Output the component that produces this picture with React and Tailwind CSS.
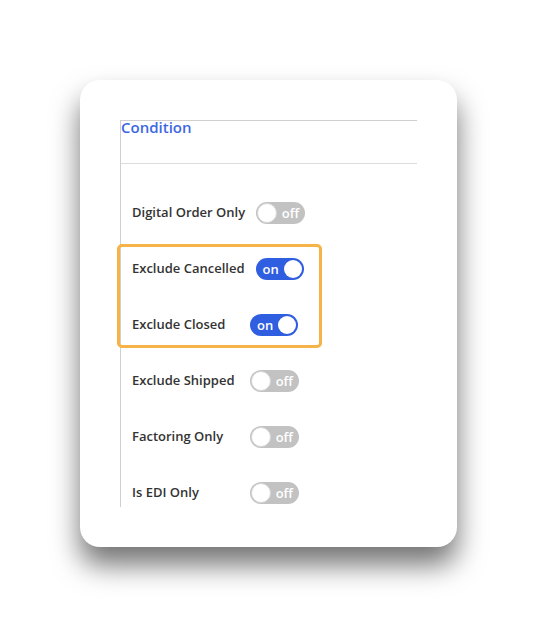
import React from 'react';

function Toggle({ on }) {
  if (on) {
    return (
      <div className="flex h-[22px] w-[48px] items-center justify-between rounded-full bg-[#2f5ee0] pl-[7px] pr-[2px]">
        <span className="text-[13px] font-semibold leading-none text-white">on</span>
        <span className="h-[18px] w-[18px] rounded-full bg-white" />
      </div>
    );
  }
  return (
    <div className="flex h-[22px] w-[49px] items-center justify-between rounded-full bg-[#c2c2c2] pl-[1px] pr-[6px]">
      <span className="h-[20px] w-[20px] rounded-full border border-[#d6d6d6] bg-white" />
      <span className="text-[13px] font-semibold leading-none text-white">off</span>
    </div>
  );
}

function Row({ label, on }) {
  return (
    <div className="flex h-[56px] items-center pl-[11px]">
      <span className="min-w-[107px] text-[13px] font-semibold text-[#333]">{label}</span>
      <span className="ml-[11px]">
        <Toggle on={on} />
      </span>
    </div>
  );
}

export default function App() {
  return (
    <div className="min-h-screen bg-white pt-[80px] pl-[80px]" style={{ fontFamily: '"Open Sans", "Noto Sans", sans-serif' }}>
      <div className="h-[467px] w-[377px] rounded-[20px] bg-white pt-[40px] pl-[40px] shadow-[0_18px_28px_rgba(0,0,0,0.55)]">
        <div className="h-[387px] w-[297px] border-t border-l border-[#cfcfcf]">
          <div className="h-[43px] border-b border-[#dcdcdc] text-[15px] font-semibold leading-[12px] text-[#3d68e3]">
            Condition
          </div>
          <div className="pt-[21px]">
            <Row label="Digital Order Only" on={false} />
            <div className="relative">
              <div className="pointer-events-none absolute left-[-4px] top-[3px] h-[104px] w-[205px] rounded-[5px] border-[3px] border-[#f6b347]" />
              <Row label="Exclude Cancelled" on />
              <Row label="Exclude Closed" on />
            </div>
            <Row label="Exclude Shipped" on={false} />
            <Row label="Factoring Only" on={false} />
            <Row label="Is EDI Only" on={false} />
          </div>
        </div>
      </div>
    </div>
  );
}
